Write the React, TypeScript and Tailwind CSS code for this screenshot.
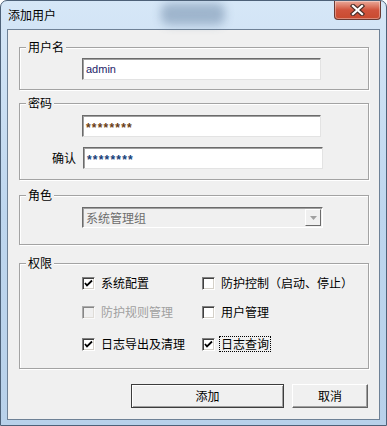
import React from "react";

const cjk = "font-['Noto_Sans_CJK_SC',sans-serif]";

function Group({
  label,
  className,
  children,
}: {
  label: string;
  className: string;
  children?: React.ReactNode;
}) {
  return (
    <div className={`relative border border-[#a3a3a3] shadow-[1px_1px_0_#ffffff,inset_1px_1px_0_#ffffff] ${className}`}>
      <span className="absolute left-[6px] top-[-9px] bg-[#f0f0f0] px-[2px] text-[12px] leading-[16px] text-black">
        {label}
      </span>
      {children}
    </div>
  );
}

function TextBox({ className, children }: { className: string; children?: React.ReactNode }) {
  return (
    <div
      className={`flex h-[22px] items-center border border-t-[#6b6b6b] border-l-[#6b6b6b] border-b-[#e3e3e3] border-r-[#e3e3e3] bg-white pl-[3px] shadow-[inset_1px_1px_0_#a0a0a0] font-['Liberation_Sans',sans-serif] text-[11px] ${className}`}
    >
      {children}
    </div>
  );
}

function Check({
  label,
  checked,
  disabled,
  focused,
}: {
  label: string;
  checked?: boolean;
  disabled?: boolean;
  focused?: boolean;
}) {
  return (
    <div className="flex h-[16px] items-center gap-[5px]">
      <div
        className={`flex h-[13px] w-[13px] items-center justify-center border border-t-[#808080] border-l-[#808080] border-b-white border-r-white shadow-[inset_1px_1px_0_#404040,inset_-1px_-1px_0_#d4d0c8] ${
          disabled ? "bg-[#f0f0f0] opacity-60" : "bg-white"
        }`}
      >
        {checked && (
          <svg width="9" height="9" viewBox="0 0 9 9">
            <path d="M1 4 L3 6.5 L8 1.5" stroke="#000" strokeWidth="1.8" fill="none" />
          </svg>
        )}
      </div>
      <span
        className={`px-[1px] text-[12px] leading-[14px] ${
          disabled ? "text-[#a0a0a0]" : "text-black"
        } ${focused ? "outline outline-1 outline-dotted outline-black" : ""}`}
      >
        {label}
      </span>
    </div>
  );
}

export default function App() {
  return (
    <div
      className={`relative flex h-[426px] w-[387px] flex-col overflow-hidden rounded-t-[7px] border border-[#4d6178] bg-gradient-to-b from-[#d6e7f7] via-[#bed6ee] to-[#b8d1ea] ${cjk}`}
    >
      {/* title bar */}
      <div className="relative flex h-[28px] shrink-0 items-start">
        <div className="pointer-events-none absolute left-[160px] top-[2px] h-[22px] w-[64px] rounded-[8px] bg-[#5f7b9b] opacity-45 blur-[5px]" />
        <span className="relative mt-[7px] pl-[7px] text-[12px] leading-[14px] text-black">添加用户</span>
        <div className="flex-1" />
        <div className="relative mr-[5px] mt-[0px] flex h-[19px] w-[47px] items-center justify-center rounded-b-[4px] border border-t-0 border-[#6b3a33] bg-gradient-to-b from-[#e9a99a] via-[#d0533c] to-[#c84a2f] shadow-[inset_0_0_0_1px_rgba(255,255,255,0.35)]">
          <svg width="15" height="12" viewBox="0 0 15 12">
            <path d="M3 2 L12 10 M12 2 L3 10" stroke="#4a2f2a" strokeWidth="4.4" strokeLinecap="square" />
            <path d="M3 2 L12 10 M12 2 L3 10" stroke="#ffffff" strokeWidth="2.2" strokeLinecap="square" />
          </svg>
        </div>
      </div>

      {/* client area */}
      <div className="mx-[6px] mb-[5px] flex flex-1 flex-col border border-[#6e8196] bg-[#f0f0f0] pl-[11px] pr-[10px]">
        <Group label="用户名" className="mt-[17px] h-[43px]">
          <TextBox className="ml-[62px] mt-[10px] w-[239px] text-[#1d2469]">admin</TextBox>
        </Group>

        <Group label="密码" className="mt-[13px] h-[77px]">
          <TextBox className="ml-[62px] mt-[11px] w-[239px] pt-[3px] text-[12px] font-bold tracking-[1.2px] text-[#6a3d14]">********</TextBox>
          <div className="mt-[10px] flex items-center gap-[7px]">
            <span className="w-[56px] text-right text-[12px] leading-[14px] text-black">确认</span>
            <TextBox className="w-[240px] pt-[3px] text-[12px] font-bold tracking-[1.2px] text-[#163e78]">********</TextBox>
          </div>
        </Group>

        <Group label="角色" className="mt-[15px] h-[50px]">
          <div className="ml-[62px] mt-[11px] flex h-[21px] w-[241px] items-center border border-t-[#6b6b6b] border-l-[#6b6b6b] border-b-white border-r-white bg-[#f0f0f0] shadow-[inset_1px_1px_0_#a0a0a0]">
            <span className="flex-1 pl-[3px] text-[12px] leading-[14px] text-[#6d6d6d]">系统管理组</span>
            <div className="mr-[1px] flex h-[17px] w-[16px] items-center justify-center border border-t-white border-l-white border-b-[#6b6b6b] border-r-[#6b6b6b] bg-[#f0f0f0]">
              <svg width="7" height="4" viewBox="0 0 7 4">
                <path d="M0 0 H7 L3.5 4 Z" fill="#a0a0a0" />
              </svg>
            </div>
          </div>
        </Group>

        <Group label="权限" className="mt-[18px] h-[106px]">
          <div className="ml-[62px] mt-[11px] grid grid-cols-[120px_1fr] gap-y-[13px]">
            <Check label="系统配置" checked />
            <Check label="防护控制（启动、停止）" />
            <Check label="防护规则管理" disabled />
            <Check label="用户管理" />
            <div className="mt-[3px]">
              <Check label="日志导出及清理" checked />
            </div>
            <div className="mt-[3px]">
              <Check label="日志查询" checked focused />
            </div>
          </div>
        </Group>

        <div className="mt-[15px] mr-[1px] flex justify-end gap-[8px]">
          <button className="flex h-[24px] w-[153px] items-center justify-center border border-[#3c3c3c] bg-[#f0f0f0] text-[12px] leading-[14px] text-black shadow-[inset_1px_1px_0_#ffffff,inset_-1px_-1px_0_#a0a0a0]">
            添加
          </button>
          <button className="flex h-[24px] w-[76px] items-center justify-center border border-t-white border-l-white border-b-[#646464] border-r-[#646464] bg-[#f0f0f0] text-[12px] leading-[14px] text-black shadow-[inset_-1px_-1px_0_#a0a0a0]">
            取消
          </button>
        </div>
      </div>
    </div>
  );
}
